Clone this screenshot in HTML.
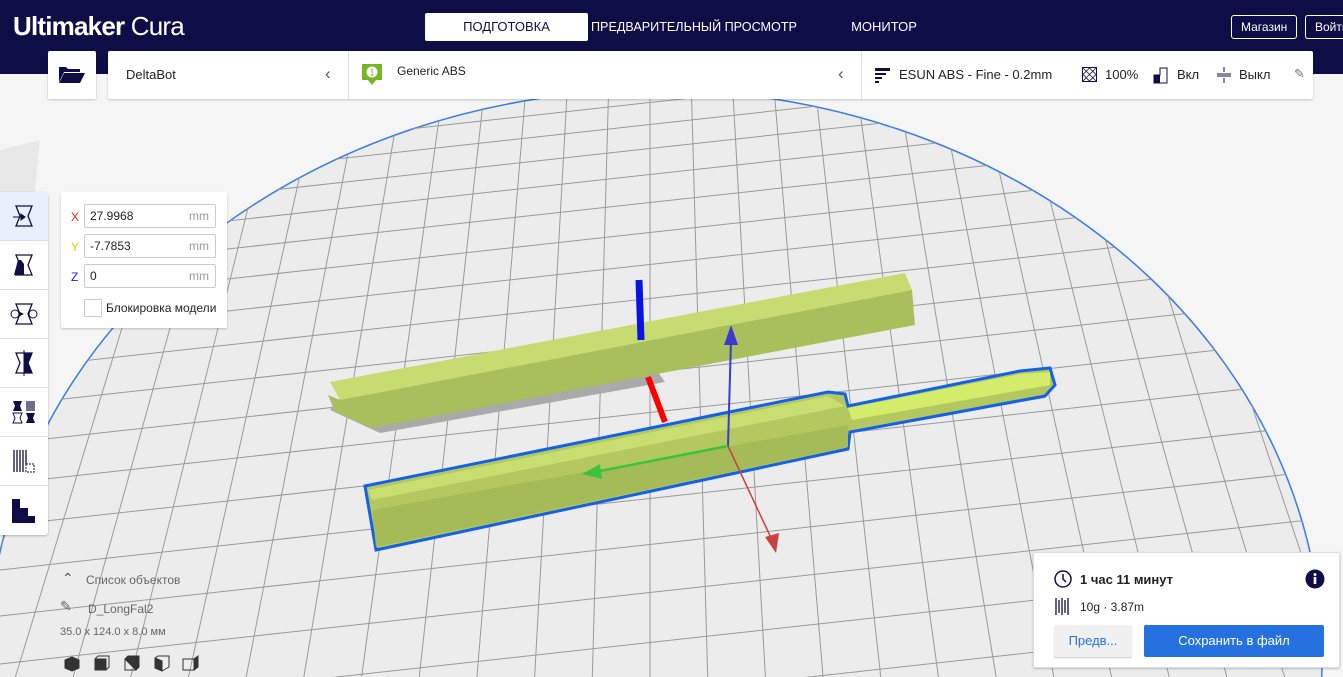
<!DOCTYPE html>
<html><head><meta charset="utf-8"><style>
*{margin:0;padding:0;box-sizing:border-box}
body{width:1343px;height:677px;overflow:hidden;position:relative;background:#f5f5f5;font-family:"Liberation Sans","Noto Sans CJK SC",sans-serif;color:#222}
#scene{position:absolute;left:0;top:0}
.hdr{position:absolute;left:0;top:0;width:1343px;height:74px;background:#0f0d46}
.logo{position:absolute;left:13px;top:11px;color:#fff;font-size:26px;letter-spacing:-0.8px}
.logo b{font-weight:bold}
.tab{position:absolute;top:13px;height:28px;line-height:28px;font-size:13px;color:#fff;text-align:center;white-space:nowrap}
.tab.on{background:#fff;color:#0f0d46;border-radius:2px}
.hbtn{position:absolute;top:15px;height:24px;line-height:22px;border:1px solid #fff;border-radius:3px;color:#fff;font-size:12px;padding:0 9px;white-space:nowrap}
.panel{position:absolute;background:#fff;box-shadow:0 1px 2px rgba(0,0,0,.2);border-radius:2px}
.t{position:absolute;font-size:13px;white-space:nowrap}
.side{position:absolute;left:0;top:192px;width:48px;height:343px;background:#fff;border-radius:0 3px 3px 0;box-shadow:0 1px 2px rgba(0,0,0,.25)}
.sb{height:49px;border-bottom:1px solid #ddd;display:flex;align-items:center;justify-content:center}
.inp{position:absolute;left:84px;width:132px;height:24px;border:1px solid #ccc;border-radius:2px;font-size:12px;line-height:22px;padding-left:5px}
.inp span{position:absolute;right:6px;color:#999}
.lbl{position:absolute;left:71px;font-size:12px}
</style></head><body>
<svg id="scene" width="1343" height="677" viewBox="0 0 1343 677">
<defs><clipPath id="plate"><ellipse cx="655" cy="660" rx="667" ry="570"/></clipPath></defs>
<polygon points="0,150 40,140 0,540" fill="#e8e8e8"/>
<ellipse cx="655" cy="660" rx="667" ry="570" fill="#ececec" stroke="#3b7be0" stroke-width="1.5"/>
<g id="grid" clip-path="url(#plate)" stroke="#9a9a9a" stroke-width="1" fill="none"></g>
<polygon points="330,410 380,433 665,382 655,368 340,398" fill="#aaa"/>
<polygon points="850,432 1045,398 1048,388 852,420" fill="#aaa"/>
<polygon points="330,382 905,273 912,290 340,400" fill="#c6dc70"/>
<polygon points="340,400 912,290 915,325 372,428 335,412 328,395" fill="#a9bf5c"/>
<polygon points="365,486 828,392 845,394 848,406 1020,371 1050,368 1055,385 1045,396 850,432 848,449 376,550" fill="#b3c95f" stroke="#1560e8" stroke-width="3"/>
<polygon points="368,490 828,396 845,406 372,500" fill="#c8de70"/>
<polygon points="848,408 1020,374 1050,372 1050,385 852,420" fill="#d3ec6a"/>
<polygon points="372,510 848,425 848,447 376,547" fill="#a5bb58"/>
<line x1="639" y1="280" x2="641" y2="340" stroke="#0a14e0" stroke-width="7"/>
<line x1="648" y1="377" x2="665" y2="422" stroke="#f00" stroke-width="6"/>
<line x1="728" y1="446" x2="731" y2="340" stroke="#3a3ad0" stroke-width="2"/>
<polygon points="731,325 724,345 738,345" fill="#3a3ad0"/>
<line x1="728" y1="446" x2="595" y2="472" stroke="#3cc23c" stroke-width="2.5"/>
<polygon points="582,474 600,464 602,479" fill="#3cc23c"/>
<line x1="728" y1="446" x2="772" y2="540" stroke="#c84040" stroke-width="1.5"/>
<polygon points="776,553 765,537 779,533" fill="#c84040"/>
</svg>
<script>
(function(){var g=document.getElementById('grid'),s='';
var ys=[88,108,130,154,180,208,238,270,304,340,378,418,460,504,550,598,648,700];
for(var i=0;i<ys.length;i++){var y=ys[i];s+='<line x1="0" y1="'+(y+600*0.11)+'" x2="1343" y2="'+(y-743*0.11)+'"/>';}
for(var k=-16;k<=16;k++){var vx=650,vy=-1400,x=650+k*50,y=400;var t=(677-vy)/(y-vy);var xb=vx+(x-vx)*t;var t2=(80-vy)/(y-vy);var xt=vx+(x-vx)*t2;s+='<line x1="'+xt+'" y1="80" x2="'+xb+'" y2="677"/>';}
g.innerHTML=s;})();
</script>
<div class="hdr"></div>
<div class="logo"><b>Ultimaker</b> Cura</div>
<div class="tab on" style="left:425px;width:163px">ПОДГОТОВКА</div>
<div class="tab" style="left:591px;width:205px;font-size:12.6px">ПРЕДВАРИТЕЛЬНЫЙ ПРОСМОТР</div>
<div class="tab" style="left:830px;width:108px">МОНИТОР</div>
<div class="hbtn" style="left:1231px">Магазин</div>
<div class="hbtn" style="left:1305px;width:60px">Войти</div>
<div class="panel" style="left:48px;top:51px;width:48px;height:48px">
<svg width="48" height="48"><path d="M11 31 L11 16 L18 16 L20 18 L32 18 L32 21 L16 21 Z M11 32 L16 22 L37 22 L32 32 Z" fill="#0f0d46"/></svg></div>
<div class="panel" style="left:108px;top:51px;width:1205px;height:48px">
<div class="t" style="left:18px;top:16px">DeltaBot</div>
<div class="t" style="left:217px;top:13px;font-size:17px;color:#555">‹</div>
<div style="position:absolute;left:240px;top:0;width:1px;height:48px;background:#ddd"></div>
<svg style="position:absolute;left:253px;top:12px" width="22" height="24"><rect x="1" y="1" width="20" height="16" fill="#76b72a"/><polygon points="7,17 15,17 11,22" fill="#76b72a"/><circle cx="11" cy="9" r="5.5" fill="#fff"/><text x="11" y="12.5" font-size="9" text-anchor="middle" fill="#76b72a" font-family="Liberation Sans">1</text></svg>
<div class="t" style="left:289px;top:13px;font-size:12px">Generic ABS</div>
<div class="t" style="left:730px;top:13px;font-size:17px;color:#555">‹</div>
<div style="position:absolute;left:753px;top:0;width:1px;height:48px;background:#ddd"></div>
<svg style="position:absolute;left:767px;top:16px" width="16" height="16"><rect x="0" y="1" width="15" height="3" fill="#0f0d46"/><rect x="0" y="6" width="11" height="2" fill="#0f0d46"/><rect x="0" y="10" width="7" height="2" fill="#0f0d46"/><rect x="0" y="14" width="4" height="2" fill="#0f0d46"/></svg>
<div class="t" style="left:791px;top:16px">ESUN ABS - Fine - 0.2mm</div>
<svg style="position:absolute;left:974px;top:16px" width="16" height="16"><rect x="0.5" y="0.5" width="14" height="14" fill="none" stroke="#0f0d46"/><path d="M1 1L14 14M14 1L1 14M7.5 1L1 7.5L7.5 14L14 7.5Z" stroke="#0f0d46" fill="none" stroke-width=".8"/></svg>
<div class="t" style="left:997px;top:16px">100%</div>
<svg style="position:absolute;left:1045px;top:15px" width="18" height="18"><path d="M1 17 L1 9 L7 9 L7 2 L14 2 L14 17 Z" fill="none" stroke="#0f0d46"/><path d="M1 17 L1 9 L7 9 L7 17Z" fill="#0f0d46"/></svg>
<div class="t" style="left:1069px;top:16px">Вкл</div>
<svg style="position:absolute;left:1108px;top:15px" width="16" height="18"><path d="M1 8h14M1 10h14M8 1v5M8 12v5" stroke="#0f0d46"/></svg>
<div class="t" style="left:1131px;top:16px">Выкл</div>
<div class="t" style="left:1186px;top:15px;color:#777">✎</div>
</div>
<div class="side">
<div class="sb" style="background:#e8f0fb"><svg width="26" height="26"><path d="M5 3h16l-4 10 4 10H5l4-10z" fill="none" stroke="#0f0d46" stroke-width="1.3"/><path d="M2 14h11M10 11l4 3-4 3z" fill="#0f0d46" stroke="#0f0d46"/></svg></div>
<div class="sb"><svg width="26" height="26"><path d="M5 3h16l-4 10 4 10H5l4-10z" fill="none" stroke="#0f0d46" stroke-width="1.3"/><path d="M3 23h10V12l-3-4H7z" fill="#0f0d46"/></svg></div>
<div class="sb"><svg width="30" height="26"><path d="M7 3h16l-4 10 4 10H7l4-10z" fill="none" stroke="#0f0d46" stroke-width="1.3"/><circle cx="6" cy="13" r="4" fill="none" stroke="#0f0d46"/><circle cx="24" cy="13" r="4" fill="none" stroke="#0f0d46"/><path d="M11 11l4 2-4 2z" fill="#0f0d46"/></svg></div>
<div class="sb"><svg width="26" height="26"><path d="M5 3h16l-4 10 4 10H5l4-10z" fill="none" stroke="#0f0d46" stroke-width="1.3"/><path d="M13 3h8l-4 10 4 10h-8z" fill="#0f0d46"/><path d="M13 0v26" stroke="#0f0d46"/></svg></div>
<div class="sb"><svg width="26" height="26"><path d="M2 2h9l-2 5 2 5H2l2-5z" fill="#0f0d46"/><path d="M15 2h9v10h-9z" fill="#0f0d46" opacity=".6"/><path d="M2 14h9l-2 5 2 5H2l2-5z" fill="none" stroke="#0f0d46"/><path d="M15 14h9l-2 5 2 5h-9l2-5z" fill="#0f0d46"/></svg></div>
<div class="sb"><svg width="26" height="26"><path d="M3 2v22M6 2v22M9 2v22M12 2v22M15 2v14" stroke="#0f0d46" stroke-width="1.3"/><rect x="15" y="16" width="8" height="8" fill="none" stroke="#0f0d46" stroke-dasharray="2 1"/></svg></div>
<div class="sb" style="border:none"><svg width="26" height="26"><path d="M1 1h8v9h8v8h7v7H1z" fill="#0f0d46"/></svg></div>
</div>
<div class="panel" style="left:61px;top:192px;width:166px;height:136px">
<div class="lbl" style="left:10px;top:18px;color:#e02020">X</div>
<div class="lbl" style="left:10px;top:48px;color:#c8d800">Y</div>
<div class="lbl" style="left:10px;top:78px;color:#2020e0">Z</div>
<div class="inp" style="left:23px;top:12px">27.9968<span>mm</span></div>
<div class="inp" style="left:23px;top:42px">-7.7853<span>mm</span></div>
<div class="inp" style="left:23px;top:72px">0<span>mm</span></div>
<div style="position:absolute;left:23px;top:107px;width:18px;height:18px;border:1px solid #ccc"></div>
<div style="position:absolute;left:45px;top:109px;font-size:12px;white-space:nowrap">Блокировка модели</div>
</div>
<div class="t" style="left:62px;top:570px;font-size:14px;color:#555">⌃</div>
<div class="t" style="left:86px;top:573px;font-size:12px;color:#666">Список объектов</div>
<div class="t" style="left:60px;top:598px;font-size:14px;color:#666">✎</div>
<div class="t" style="left:88px;top:602px;font-size:12px;color:#666">D_LongFal2</div>
<div class="t" style="left:60px;top:626px;font-size:11px;color:#666">35.0 x 124.0 x 8.0 мм</div>
<svg style="position:absolute;left:63px;top:655px" width="140" height="18"><g fill="#333" stroke="#333"><path d="M2 5l7-3 7 3v8l-7 3-7-3z"/><rect x="32" y="4" width="11" height="11"/><path d="M32 4l3-3h11v11l-3 3" fill="none"/><rect x="62" y="4" width="11" height="11" fill="none"/><path d="M62 4l3-3h11v11l-3 3z"/><path d="M92 3l7 3v10l-7-3z"/><path d="M92 3l3-2h11v11l-7 4" fill="none"/><rect x="120" y="4" width="11" height="11" fill="none"/><path d="M131 4l4-3v11l-4 3z"/></g></svg>
<div class="panel" style="left:1033px;top:552px;width:307px;height:116px;border:1px solid #ddd">
<svg style="position:absolute;left:20px;top:17px" width="18" height="18"><circle cx="9" cy="9" r="8" fill="none" stroke="#0f0d46" stroke-width="1.5"/><path d="M9 4v5l3 3" stroke="#0f0d46" stroke-width="1.5" fill="none"/></svg>
<div class="t" style="left:46px;top:19px;font-weight:bold">1 час 11 минут</div>
<svg style="position:absolute;left:271px;top:16px" width="20" height="20"><circle cx="10" cy="10" r="9.5" fill="#0f0d46"/><rect x="8.7" y="8" width="2.6" height="7" fill="#fff"/><circle cx="10" cy="5.5" r="1.5" fill="#fff"/></svg>
<svg style="position:absolute;left:21px;top:45px" width="16" height="17"><path d="M1 0v17M4 2v13M7 0v17M10 2v13M13 0v17" stroke="#0f0d46" stroke-width="1.3"/></svg>
<div class="t" style="left:46px;top:47px;font-size:12px">10g · 3.87m</div>
<div style="position:absolute;left:20px;top:72px;width:78px;height:32px;background:#f0f0f0;border-radius:2px;box-shadow:0 1px 1px rgba(0,0,0,.2);color:#2671e0;font-size:13px;text-align:center;line-height:32px">Предв...</div>
<div style="position:absolute;left:110px;top:72px;width:180px;height:32px;background:#2671e0;border-radius:2px;color:#fff;font-size:13px;text-align:center;line-height:32px">Сохранить в файл</div>
</div>
</body></html>
